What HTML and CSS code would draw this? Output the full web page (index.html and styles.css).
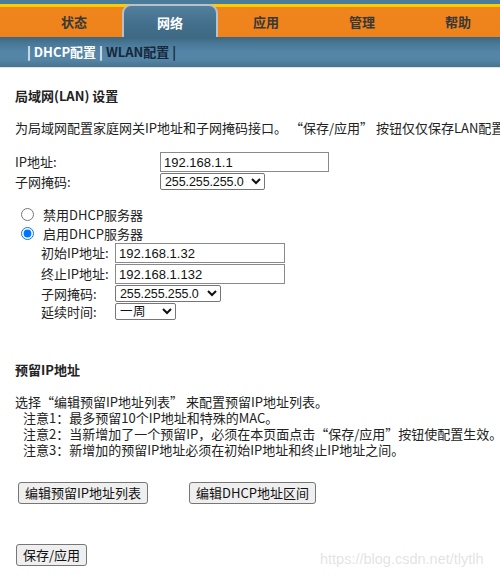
FILE: index.html
```html
<!DOCTYPE html>
<html lang="zh-CN">
<head>
<meta charset="utf-8">
<title>网络 - DHCP配置</title>
<link rel="stylesheet" href="styles.css">
</head>
<body>
<div class="nav">
  <div class="tab">状态</div>
  <div class="tab active">网络</div>
  <div class="tab">应用</div>
  <div class="tab">管理</div>
  <div class="tab">帮助</div>
</div>
<div class="subnav">
  <span class="cur">| DHCP配置 |</span> <span class="other">WLAN配置 |</span>
</div>
<div class="content">
  <div class="heading lan-head">局域网(LAN) 设置</div>
  <div class="desc">为局域网配置家庭网关IP地址和子网掩码接口。&nbsp;“保存/应用” 按钮仅仅保存LAN配置数据，不会立即生效。</div>

  <div class="lan-grid">
    <label class="lbl">IP地址:</label>
    <input class="txt w169" type="text" value="192.168.1.1">
    <label class="lbl">子网掩码:</label>
    <select class="sel w105"><option>255.255.255.0</option></select>
  </div>

  <div class="radios">
    <label class="radio-row"><input type="radio" name="dhcp" class="rd"><span>禁用DHCP服务器</span></label>
    <label class="radio-row"><input type="radio" name="dhcp" class="rd" checked><span>启用DHCP服务器</span></label>
  </div>

  <div class="dhcp-grid">
    <label class="lbl">初始IP地址:</label>
    <input class="txt w170" type="text" value="192.168.1.32">
    <label class="lbl">终止IP地址:</label>
    <input class="txt w170" type="text" value="192.168.1.132">
    <label class="lbl">子网掩码:</label>
    <select class="sel w106"><option>255.255.255.0</option></select>
    <label class="lbl">延续时间:</label>
    <select class="sel w61"><option>一周</option></select>
  </div>

  <div class="heading res-head">预留IP地址</div>
  <div class="notes">
    <div class="line">选择“编辑预留IP地址列表” 来配置预留IP地址列表。</div>
    <div class="line note">注意1：最多预留10个IP地址和特殊的MAC。</div>
    <div class="line note">注意2：当新增加了一个预留IP，必须在本页面点击“保存/应用”按钮使配置生效。</div>
    <div class="line note">注意3：新增加的预留IP地址必须在初始IP地址和终止IP地址之间。</div>
  </div>

  <div class="btn-row">
    <button class="btn" type="button">编辑预留IP地址列表</button>
    <button class="btn" type="button">编辑DHCP地址区间</button>
  </div>

  <div class="save-row">
    <button class="btn" type="button">保存/应用</button>
  </div>
</div>
<div class="watermark">https://blog.csdn.net/tlytlh</div>
</body>
</html>
```
FILE: styles.css
```css
html, body {
  margin: 0;
  padding: 0;
  overflow: hidden;
}
body {
  position: relative;
  width: 500px;
  height: 577px;
  font-family: "Noto Sans CJK SC", sans-serif;
  font-size: 13px;
  line-height: 16px;
  color: #222;
  background: #fff;
}
.nav {
  height: 37px;
  display: flex;
  align-items: flex-end;
  padding-left: 26px;
  background: linear-gradient(to bottom, #4a7b9a 0, #4a7b9a 4px, #ffcc00 4px, #ffcc00 7px, #f0851d 7px, #ee831b 100%);
}
.tab {
  width: 96px;
  height: 30px;
  flex: none;
  box-sizing: border-box;
  display: flex;
  align-items: center;
  justify-content: center;
  font-weight: bold;
  color: #383838;
  font-size: 13px;
}
.tab.active {
  height: 33px;
  padding-top: 3px;
  color: #fff;
  border: 2px solid #b9c1c8;
  border-bottom: none;
  border-radius: 9px 9px 0 0;
  background: linear-gradient(to bottom, #527f9c, #436f8c 60%, #3e6984);
}
.subnav {
  height: 30px;
  line-height: 30px;
  padding-left: 27px;
  font-weight: bold;
  font-size: 13px;
  border-bottom: 1px solid #dfe4e8;
  background: linear-gradient(to bottom, #3d6781 0, #4b7a99 25%, #5485a7 50%, #5585a6 75%, #46738f 100%);
  white-space: nowrap;
}
.subnav .cur { color: #fff; }
.subnav .other { color: #17283a; }
.content {
  padding-left: 15px;
}
.heading {
  font-weight: bold;
}
.lan-head { padding-top: 20px; }
.desc {
  margin-top: 16px;
  white-space: nowrap;
  overflow: hidden;
}
.lan-grid {
  margin-top: 16px;
  display: grid;
  grid-template-columns: 145px auto;
  justify-content: start;
  align-items: center;
  row-gap: 1px;
}
.lbl {
  line-height: 16px;
}
.txt {
  box-sizing: border-box;
  height: 20px;
  margin: 0;
  padding: 0 3px;
  border: 1px solid #8a8a8a;
  border-radius: 0;
  font-family: "Liberation Sans", Arial, sans-serif;
  font-size: 13px;
  color: #111;
}
.sel {
  box-sizing: border-box;
  height: 17px;
  margin: 0;
  padding: 0;
  border: 1px solid #767676;
  border-radius: 2px;
  font-family: "Liberation Sans", Arial, sans-serif;
  font-size: 12.5px;
  letter-spacing: -0.1px;
  color: #111;
  background: #fff;
}
.w169 { width: 169px; }
.w170 { width: 170px; }
.w105 { width: 105px; }
.w106 { width: 106px; }
.w61 { width: 61px; }
.radios {
  margin-top: 15px;
  display: flex;
  flex-direction: column;
}
.radio-row {
  height: 19px;
  display: flex;
  align-items: center;
}
.rd {
  width: 13px;
  height: 13px;
  margin: 0 9px 0 6px;
}
.dhcp-grid {
  margin-left: 26px;
  display: grid;
  grid-template-columns: 74px auto;
  justify-content: start;
  align-items: center;
  row-gap: 1px;
}
.res-head {
  margin-top: 42px;
}
.notes {
  margin-top: 16px;
  white-space: nowrap;
}
.line {
  height: 16px;
  line-height: 16px;
}
.note {
  padding-left: 8px;
}
.btn-row {
  margin-top: 24px;
  display: flex;
  gap: 41px;
  padding-left: 3px;
}
.btn {
  box-sizing: border-box;
  height: 22px;
  margin: 0;
  padding: 0 6px;
  white-space: nowrap;
  font-family: "Noto Sans CJK SC", sans-serif;
  font-size: 13px;
  line-height: 16px;
  color: #111;
  background: #efefef;
  border: 1px solid #767676;
  border-radius: 3px;
}
.save-row {
  margin-top: 40px;
  padding-left: 1px;
}
.watermark {
  position: absolute;
  left: 320px;
  top: 550px;
  font-family: "Liberation Sans", Arial, sans-serif;
  font-size: 14.5px;
  line-height: 18px;
  color: rgba(200, 200, 200, 0.5);
  white-space: nowrap;
}
```
